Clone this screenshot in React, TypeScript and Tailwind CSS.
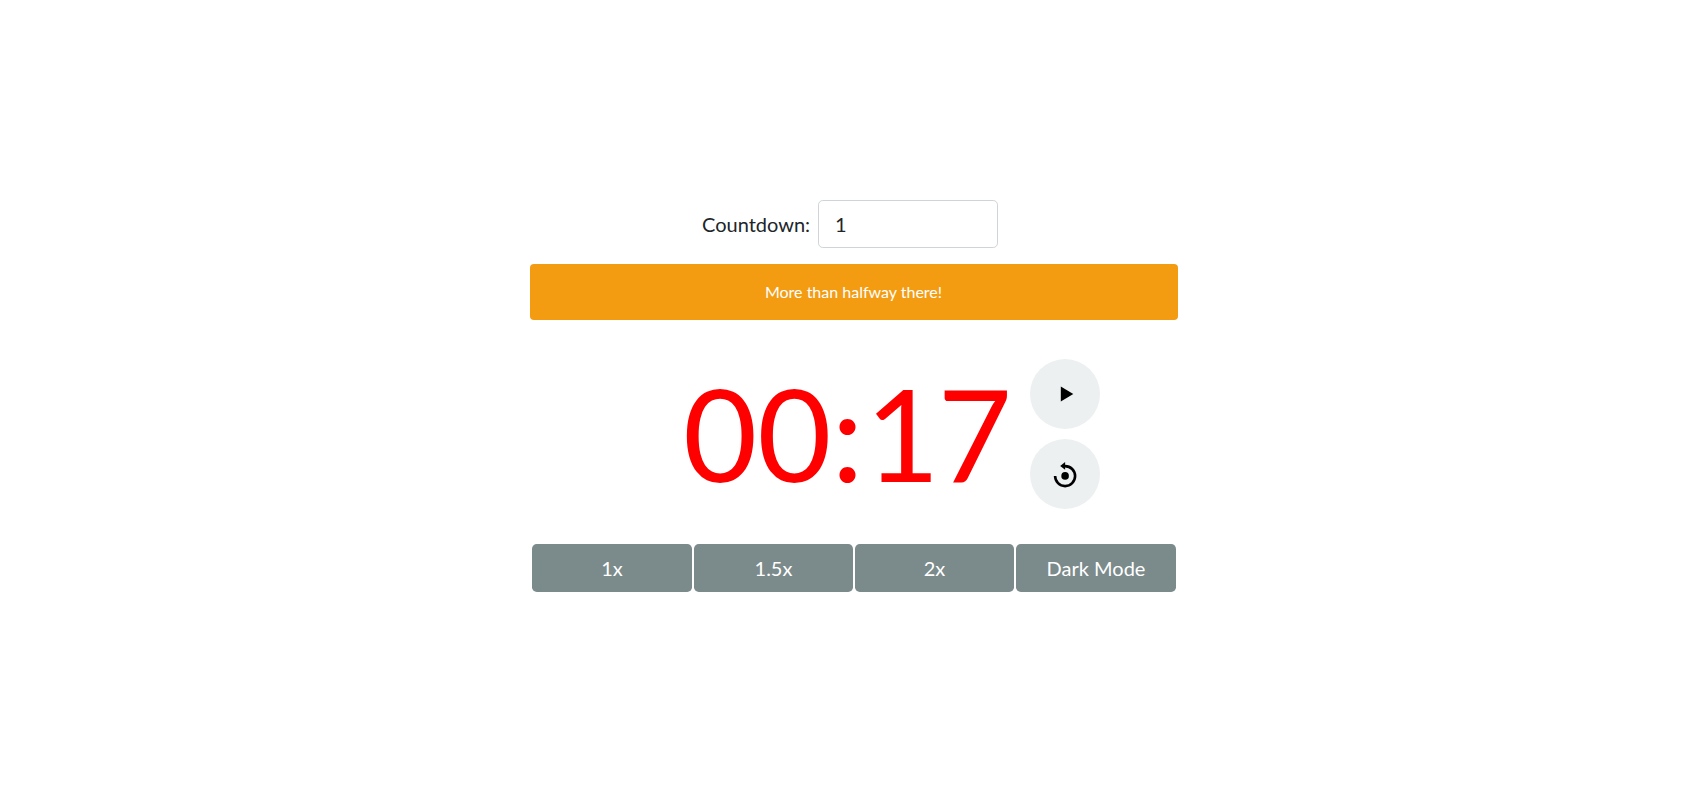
import React from "react";

const rates = ["1x", "1.5x", "2x", "Dark Mode"];

export default function App() {
  return (
    <main className="flex min-h-screen flex-col items-center bg-white pt-[200px] pl-0.5 font-['Lato',sans-serif] text-[#212529]">
      <div className="flex w-[648px] flex-col">
        <div className="flex h-12 items-center pl-[172px] text-xl">
          <label htmlFor="minutes" className="w-[116px]">Countdown:</label>
          <input
            id="minutes"
            defaultValue="1"
            className="h-12 w-[180px] rounded-[4.8px] border border-[#ced4da] bg-white px-4 text-xl"
          />
        </div>
        <div className="mt-4 flex h-14 items-center justify-center rounded bg-[#f39c12] pr-px text-base text-white">
          More than halfway there!
        </div>
        <div className="mt-[39px] flex h-[150px] items-center pl-[153px]">
          <div className="w-[347px] text-[128px] leading-[148px] pb-0.5 text-[#ff0000]">
            00<span className="tracking-[2px]">:</span><span className="tracking-[-2px]">1</span>7
          </div>
          <div className="flex flex-col gap-2.5">
            <button aria-label="Start" className="flex size-[70px] items-center justify-center rounded-full bg-[#ecf0f1] text-black">
              <svg viewBox="0 0 30 30" className="size-[30px]" fill="currentColor">
                <path d="M10.8 7.6v14.8L23.3 15z" />
              </svg>
            </button>
            <button aria-label="Reset" className="flex size-[70px] items-center justify-center rounded-full bg-[#ecf0f1] text-black">
              <svg viewBox="0 0 30 30" className="size-[30px]" fill="none">
                <path d="M5.1 17.1a10 10 0 1 0 10-10h-1" stroke="currentColor" strokeWidth="2.6" />
                <path d="M10.2 6.9l4.9-3.8v7.6z" fill="currentColor" />
                <circle cx="15.1" cy="16.9" r="3.8" fill="currentColor" />
              </svg>
            </button>
          </div>
        </div>
        <div className="mt-[35px] grid grid-cols-[160px_159px_159px_160px] gap-0.5 px-0.5">
          {rates.map((rate) => (
            <button key={rate} className="h-12 rounded-[4.8px] bg-[#7b8a8b] text-xl text-white">
              {rate}
            </button>
          ))}
        </div>
      </div>
    </main>
  );
}
